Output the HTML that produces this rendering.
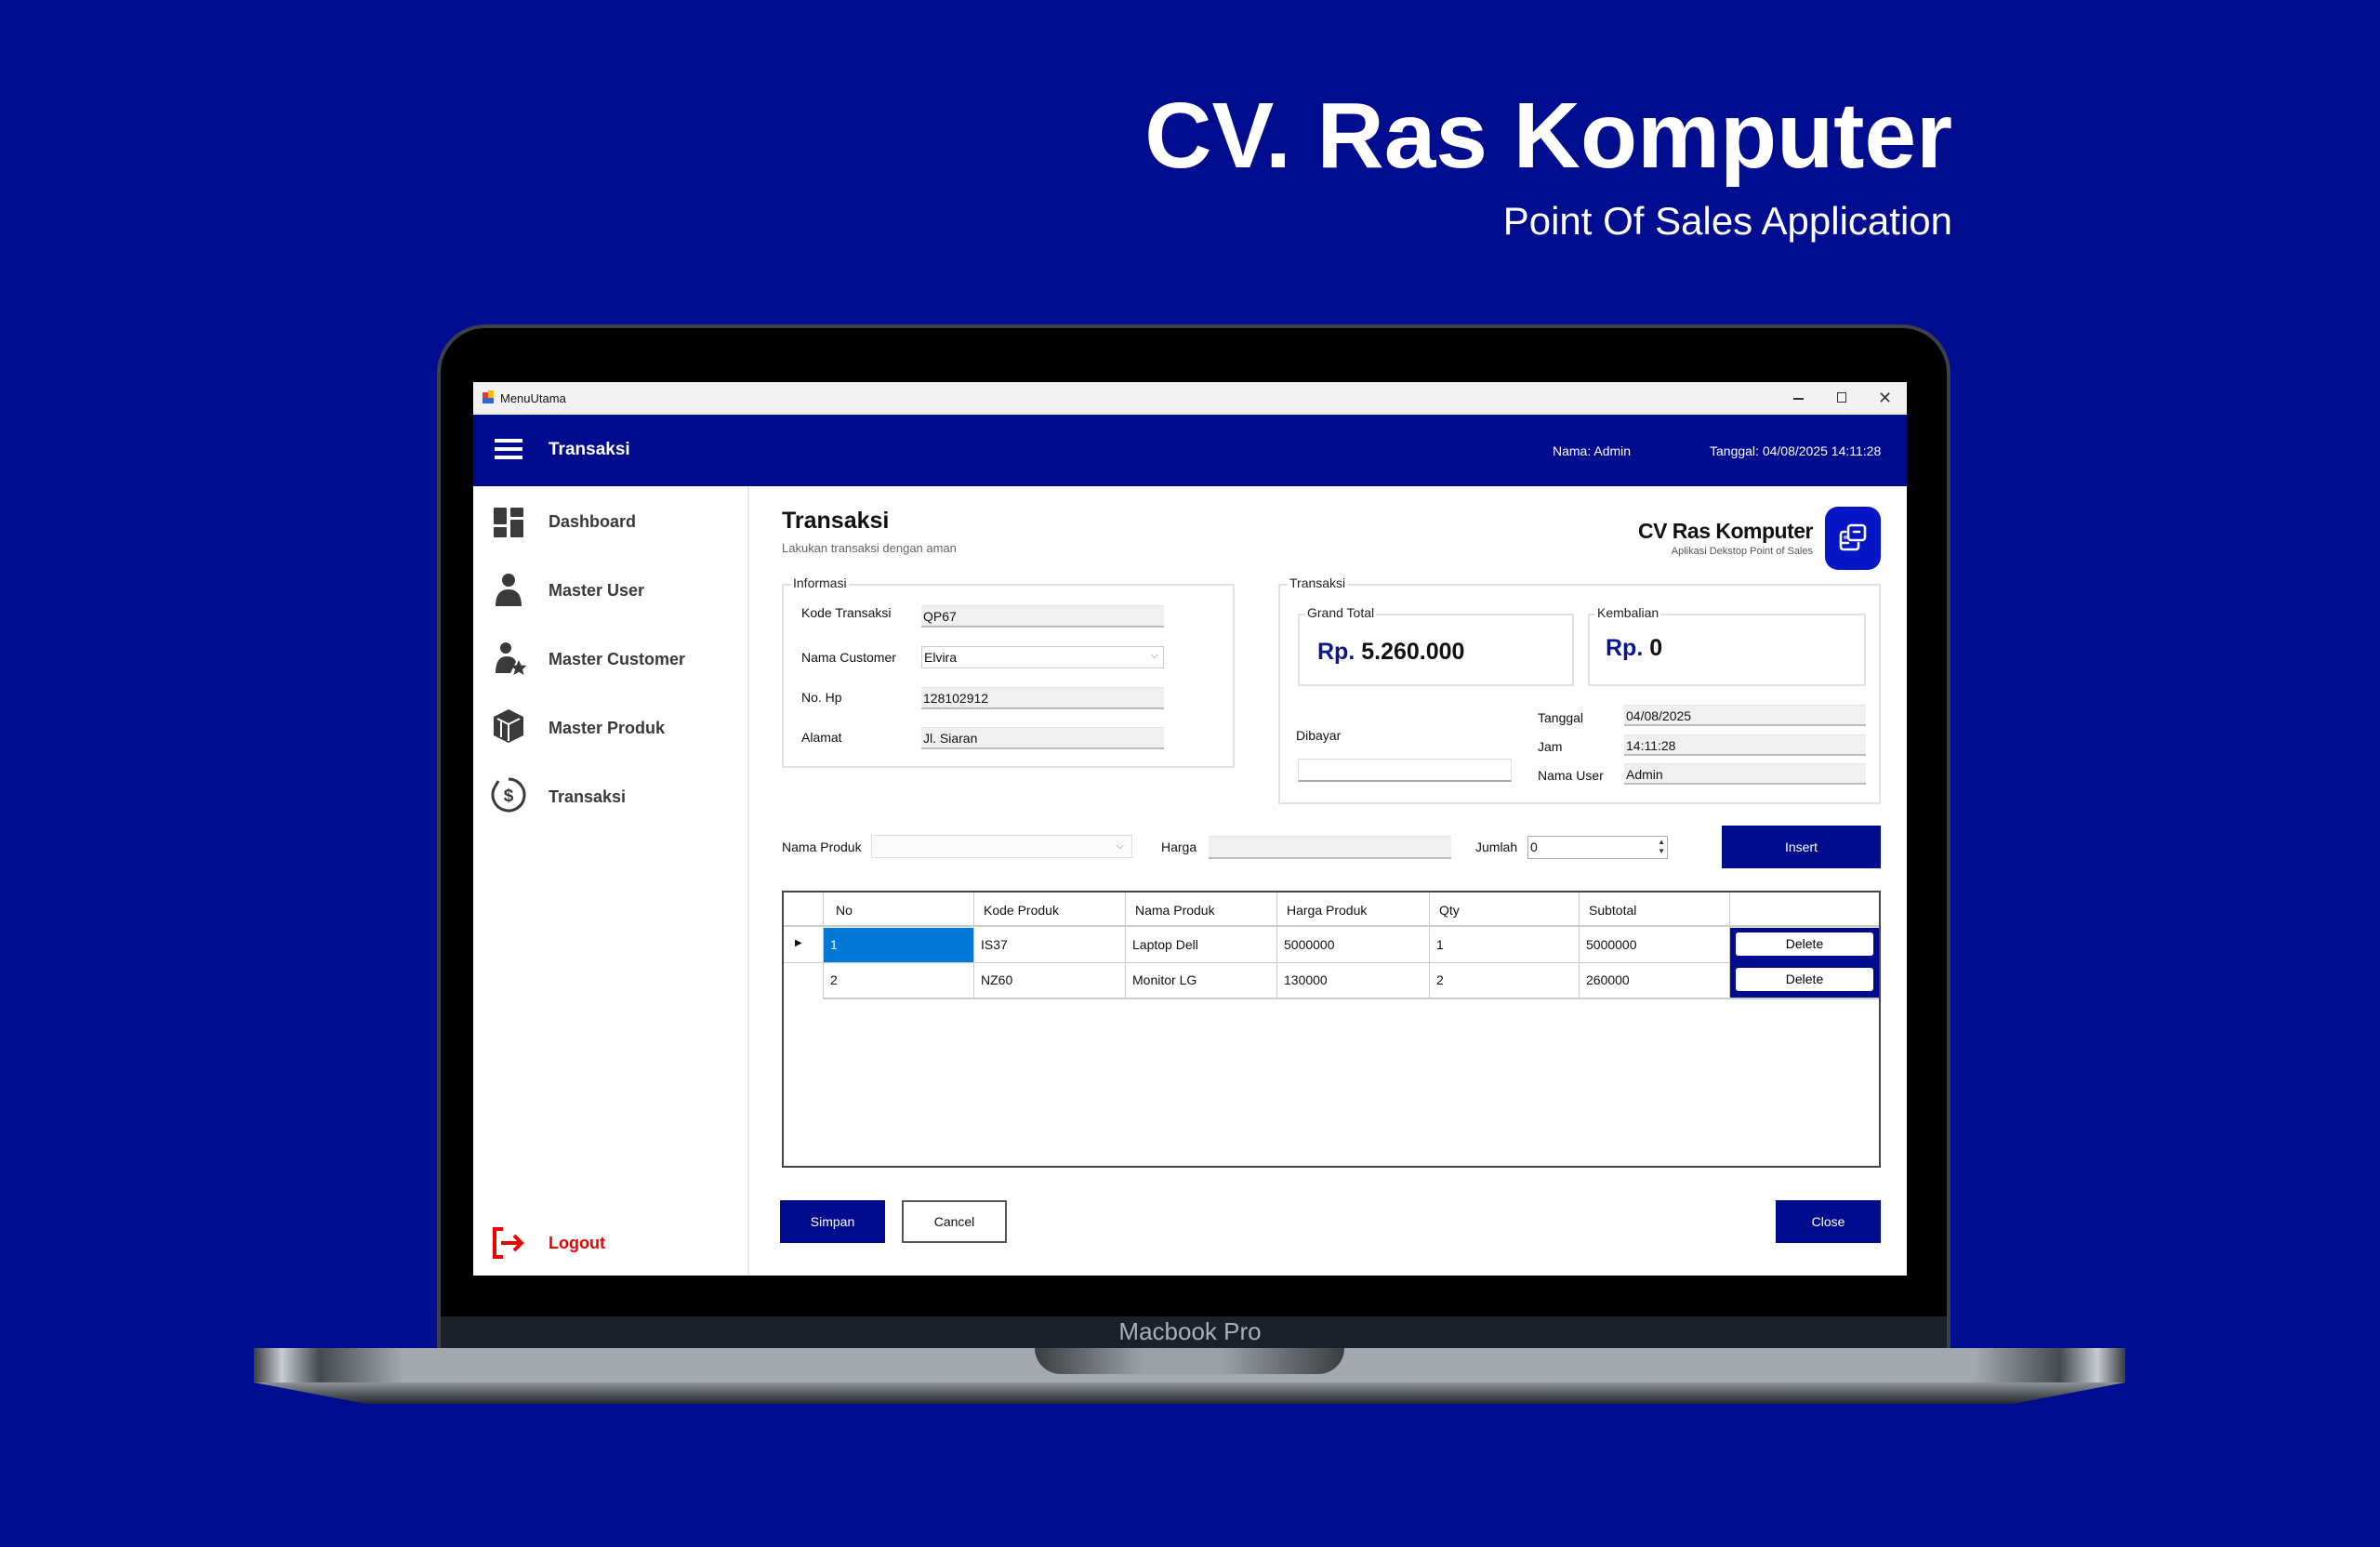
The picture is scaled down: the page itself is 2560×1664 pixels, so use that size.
<!DOCTYPE html>
<html><head><meta charset="utf-8">
<style>
*{margin:0;padding:0;box-sizing:border-box}
body{width:2560px;height:1664px;overflow:hidden;background:#010d8f;font-family:"Liberation Sans",sans-serif;position:relative}
.a{position:absolute}
.t{position:absolute;white-space:nowrap;font-size:14px;color:#111;line-height:1}
.inp{position:absolute;background:#f0f0f0;border-bottom:2px solid #bdbdbd;border-top:1px solid #e6e6e6;font-size:14px;padding:4px 2px;line-height:1;color:#111}
.grp{position:absolute;border:2px solid #e2e2e2}
.grp>span{position:absolute;top:-10px;left:8px;background:#fff;padding:0 2px;font-size:14px;color:#222;line-height:1}
.nav{position:absolute;left:590px;font-weight:bold;font-size:18px;color:#3a3a3a;white-space:nowrap}
.btn{position:absolute;background:#000c8e;color:#fff;font-size:14px;display:flex;align-items:center;justify-content:center}
.col{position:absolute;top:0;height:113px;border-left:1px solid #ccc}
</style></head><body>
<div class="t" style="right:460px;top:96px;font-size:100px;font-weight:bold;color:#fff;letter-spacing:0px">CV. Ras Komputer</div>
<div class="t" style="right:460px;top:217px;font-size:42px;color:#fff">Point Of Sales Application</div>

<!-- laptop -->
<div class="a" style="left:470px;top:349px;width:1628px;height:1102px;background:#000;border:4px solid #3b404b;border-bottom:none;border-radius:52px 52px 0 0"></div>
<div class="a" style="left:474px;top:1416px;width:1620px;height:35px;background:#1b202b"></div>
<div class="t" style="left:0;width:2560px;text-align:center;top:1419px;font-size:26px;color:#a9b0bb">Macbook Pro</div>
<div class="a" style="left:273px;top:1450px;width:2013px;height:37px;background:linear-gradient(90deg,#3a3d42 0%,#c6ccd2 1.5%,#444a50 3.5%,#a3a9af 8%,#a3a9af 92%,#444a50 96.5%,#c6ccd2 98.5%,#3a3d42 100%)"></div>
<div class="a" style="left:1113px;top:1450px;width:333px;height:28px;background:linear-gradient(90deg,#3b3d40,#9aa2a8 35%,#9aa2a8 60%,#3b3d40);border-radius:0 0 28px 28px"></div>
<div class="a" style="left:273px;top:1487px;width:2013px;height:23px;background:linear-gradient(#8d9399,#25282c);clip-path:polygon(0 0,100% 0,94% 100%,6% 100%);border-radius:0 0 40px 40px"></div>

<!-- window -->
<div class="a" style="left:509px;top:411px;width:1542px;height:961px;background:#fff;overflow:hidden">
 <div class="a" style="left:0;top:0;width:1542px;height:34px;background:#f2f2f2;border-bottom:1px solid #ddd"></div>
 <div class="a" style="left:10px;top:11px;width:6px;height:6px;background:#e33"></div><div class="a" style="left:16px;top:9px;width:6px;height:8px;background:#fb0"></div><div class="a" style="left:10px;top:17px;width:12px;height:6px;background:#36c"></div>
 <div class="t" style="left:29px;top:11px;font-size:13px">MenuUtama</div>
 <div class="a" style="left:1420px;top:17px;width:11px;height:1.5px;background:#333"></div>
 <div class="a" style="left:1467px;top:11px;width:10px;height:11px;border:1.5px solid #333"></div>
 <div class="t" style="left:1511px;top:8px;font-size:18px;color:#333">✕</div>
 <div class="a" style="left:0;top:35px;width:1542px;height:77px;background:#000c8e"></div>
 <div class="a" style="left:23px;top:61px;width:30px;height:4px;background:#fff;box-shadow:0 9px 0 #fff,0 18px 0 #fff"></div>
 <div class="t" style="left:81px;top:63px;font-size:19px;font-weight:bold;color:#fff">Transaksi</div>
 <div class="t" style="left:1161px;top:67px;font-size:14px;color:#fff">Nama: Admin</div>
 <div class="t" style="left:1330px;top:67px;font-size:14px;color:#fff">Tanggal: 04/08/2025 14:11:28</div>
 <div class="a" style="left:295px;top:112px;width:2px;height:850px;background:#e8e8e8"></div>
</div>

<!-- sidebar -->
<svg class="a" style="left:531px;top:546px" width="32" height="32" viewBox="0 0 32 32" fill="#3a3a3a"><rect x="0" y="0" width="14" height="18" rx="1"/><rect x="18" y="0" width="14" height="10" rx="1"/><rect x="0" y="21" width="14" height="11" rx="1"/><rect x="18" y="13" width="14" height="19" rx="1"/></svg>
<div class="nav" style="top:551px">Dashboard</div>
<svg class="a" style="left:531px;top:616px" width="32" height="36" viewBox="0 0 32 36" fill="#3a3a3a"><circle cx="16" cy="8" r="7"/><path d="M2 36 Q2 18 16 18 Q30 18 30 36Z"/></svg>
<div class="nav" style="top:625px">Master User</div>
<svg class="a" style="left:531px;top:690px" width="36" height="36" viewBox="0 0 36 36" fill="#3a3a3a"><circle cx="13" cy="7" r="6"/><path d="M2 34 Q2 16 14 16 Q22 16 24 22 L18 34Z"/><path d="M27 20 l2.5 5.5 6 .5 -4.5 4 1.5 6 -5.5-3.2 -5.5 3.2 1.5-6 -4.5-4 6-.5Z"/></svg>
<div class="nav" style="top:699px">Master Customer</div>
<svg class="a" style="left:531px;top:763px" width="32" height="36" viewBox="0 0 32 36" fill="#3a3a3a"><path d="M16 0 L32 8 L32 28 L16 36 L0 28 L0 8Z"/><path d="M4 10 L16 16 L28 10 M16 16 L16 34 M8 12 L8 30" stroke="#fff" stroke-width="2" fill="none"/></svg>
<div class="nav" style="top:773px">Master Produk</div>
<svg class="a" style="left:528px;top:836px" width="38" height="38" viewBox="0 0 38 38" fill="none" stroke="#3a3a3a" stroke-width="3"><path d="M19 2 A17 17 0 1 1 4 11"/><path d="M4 11 L8 4"/><text x="19" y="26" font-size="19" font-family="Liberation Sans" fill="#3a3a3a" stroke="none" text-anchor="middle" font-weight="bold">$</text></svg>
<div class="nav" style="top:847px">Transaksi</div>
<svg class="a" style="left:529px;top:1320px" width="36" height="34" viewBox="0 0 36 34" fill="none" stroke="#e00" stroke-width="4"><path d="M12 2 H3 V32 H12"/><path d="M10 17 H32 M24 9 L32 17 L24 25"/></svg>
<div class="nav" style="top:1327px;color:#e00">Logout</div>

<!-- content -->
<div class="t" style="left:841px;top:548px;font-size:25px;font-weight:bold">Transaksi</div>
<div class="t" style="left:841px;top:583px;font-size:13px;color:#666">Lakukan transaksi dengan aman</div>
<div class="t" style="right:610px;top:560px;font-size:23px;font-weight:bold;letter-spacing:-0.5px">CV Ras Komputer</div>
<div class="t" style="right:610px;top:588px;font-size:11px;color:#555">Aplikasi Dekstop Point of Sales</div>
<div class="a" style="left:1963px;top:545px;width:60px;height:68px;background:#0616c6;border-radius:14px"></div>
<svg class="a" style="left:1977px;top:562px" width="32" height="32" viewBox="0 0 32 32" fill="none" stroke="#fff" stroke-width="2.6" stroke-linecap="round"><rect x="11" y="3" width="18" height="16" rx="3"/><path d="M17 10 h6"/><path d="M8 10 H6 Q3 10 3 13 V26 Q3 29 6 29 H19 Q22 29 22 26 V22"/><path d="M3 22 H11"/><circle cx="8" cy="16" r="0.5"/></svg>

<div class="grp" style="left:841px;top:628px;width:487px;height:198px"><span>Informasi</span></div>
<div class="t" style="left:862px;top:652px">Kode Transaksi</div>
<div class="inp" style="left:991px;top:651px;width:261px;height:24px">QP67</div>
<div class="t" style="left:862px;top:700px">Nama Customer</div>
<div class="inp" style="left:991px;top:695px;width:261px;height:24px;background:#fff;border:1px solid #ccc">Elvira<span style="position:absolute;right:5px;top:4px;font-size:11px;color:#777">⌵</span></div>
<div class="t" style="left:862px;top:743px">No. Hp</div>
<div class="inp" style="left:991px;top:739px;width:261px;height:24px">128102912</div>
<div class="t" style="left:862px;top:786px">Alamat</div>
<div class="inp" style="left:991px;top:782px;width:261px;height:24px">Jl. Siaran</div>

<div class="grp" style="left:1375px;top:628px;width:648px;height:237px"><span>Transaksi</span></div>
<div class="grp" style="left:1396px;top:660px;width:297px;height:78px"><span style="left:6px">Grand Total</span></div>
<div class="t" style="left:1417px;top:689px;font-size:25px;font-weight:bold"><span style="color:#0a168c">Rp.</span> 5.260.000</div>
<div class="grp" style="left:1708px;top:660px;width:299px;height:78px"><span style="left:6px">Kembalian</span></div>
<div class="t" style="left:1727px;top:685px;font-size:25px;font-weight:bold"><span style="color:#0a168c">Rp.</span> 0</div>
<div class="t" style="left:1394px;top:784px">Dibayar</div>
<div class="a" style="left:1396px;top:816px;width:230px;height:25px;border:1px solid #ddd;border-bottom:2px solid #aaa"></div>
<div class="t" style="left:1654px;top:765px">Tanggal</div>
<div class="inp" style="left:1747px;top:758px;width:260px;height:23px">04/08/2025</div>
<div class="t" style="left:1654px;top:796px">Jam</div>
<div class="inp" style="left:1747px;top:790px;width:260px;height:23px">14:11:28</div>
<div class="t" style="left:1654px;top:827px">Nama User</div>
<div class="inp" style="left:1747px;top:821px;width:260px;height:23px">Admin</div>

<div class="t" style="left:841px;top:904px">Nama Produk</div>
<div class="a" style="left:937px;top:898px;width:281px;height:25px;border:1px solid #ddd;background:#fcfcfc"><span style="position:absolute;right:8px;top:5px;font-size:11px;color:#777">⌵</span></div>
<div class="t" style="left:1249px;top:904px">Harga</div>
<div class="inp" style="left:1300px;top:899px;width:261px;height:25px"></div>
<div class="t" style="left:1587px;top:904px">Jumlah</div>
<div class="inp" style="left:1643px;top:899px;width:151px;height:25px;background:#fff;border:1px solid #aaa">0<span style="position:absolute;right:2px;top:1px;font-size:8px;color:#333;line-height:10px">▲<br>▼</span></div>
<div class="btn" style="left:1852px;top:888px;width:171px;height:46px">Insert</div>

<!-- table -->
<div class="a" style="left:841px;top:958px;width:1182px;height:298px;border:2px solid #444;background:#fff">
 <div class="a" style="left:0;top:0;width:1178px;height:37px;border-bottom:2px solid #ccc"></div>
 <div class="a" style="left:0;top:75px;width:1178px;height:1px;background:#ccc"></div>
 <div class="a" style="left:42px;top:113px;width:1136px;height:2px;background:#ccc"></div>
 <div class="a" style="left:42px;top:38px;width:162px;height:37px;background:#0078d7"></div>
 <div class="a" style="left:1017px;top:38px;width:161px;height:75px;background:#000c8e"></div>
 <div class="col" style="left:42px"></div><div class="col" style="left:204px"></div><div class="col" style="left:367px"></div><div class="col" style="left:530px"></div><div class="col" style="left:694px"></div><div class="col" style="left:855px"></div><div class="col" style="left:1017px"></div>
 <div class="t" style="left:56px;top:12px;font-size:14px">No</div>
 <div class="t" style="left:215px;top:12px;font-size:14px">Kode Produk</div>
 <div class="t" style="left:378px;top:12px;font-size:14px">Nama Produk</div>
 <div class="t" style="left:541px;top:12px;font-size:14px">Harga Produk</div>
 <div class="t" style="left:705px;top:12px;font-size:14px">Qty</div>
 <div class="t" style="left:866px;top:12px;font-size:14px">Subtotal</div>
 <div class="t" style="left:12px;top:50px;font-size:10px">▶</div>
 <div class="t" style="left:50px;top:49px;font-size:14px;color:#fff">1</div>
 <div class="t" style="left:212px;top:49px;font-size:14px">IS37</div>
 <div class="t" style="left:375px;top:49px;font-size:14px">Laptop Dell</div>
 <div class="t" style="left:538px;top:49px;font-size:14px">5000000</div>
 <div class="t" style="left:702px;top:49px;font-size:14px">1</div>
 <div class="t" style="left:863px;top:49px;font-size:14px">5000000</div>
 <div class="a" style="left:1024px;top:43px;width:148px;height:25px;background:#fff;border-radius:3px;font-size:14px;text-align:center;line-height:25px">Delete</div>
 <div class="t" style="left:50px;top:87px;font-size:14px">2</div>
 <div class="t" style="left:212px;top:87px;font-size:14px">NZ60</div>
 <div class="t" style="left:375px;top:87px;font-size:14px">Monitor LG</div>
 <div class="t" style="left:538px;top:87px;font-size:14px">130000</div>
 <div class="t" style="left:702px;top:87px;font-size:14px">2</div>
 <div class="t" style="left:863px;top:87px;font-size:14px">260000</div>
 <div class="a" style="left:1024px;top:81px;width:148px;height:25px;background:#fff;border-radius:3px;font-size:14px;text-align:center;line-height:25px">Delete</div>
</div>

<div class="btn" style="left:839px;top:1291px;width:113px;height:46px">Simpan</div>
<div class="btn" style="left:970px;top:1291px;width:113px;height:46px;background:#fff;color:#111;border:2px solid #555">Cancel</div>
<div class="btn" style="left:1910px;top:1291px;width:113px;height:46px">Close</div>
</body></html>
